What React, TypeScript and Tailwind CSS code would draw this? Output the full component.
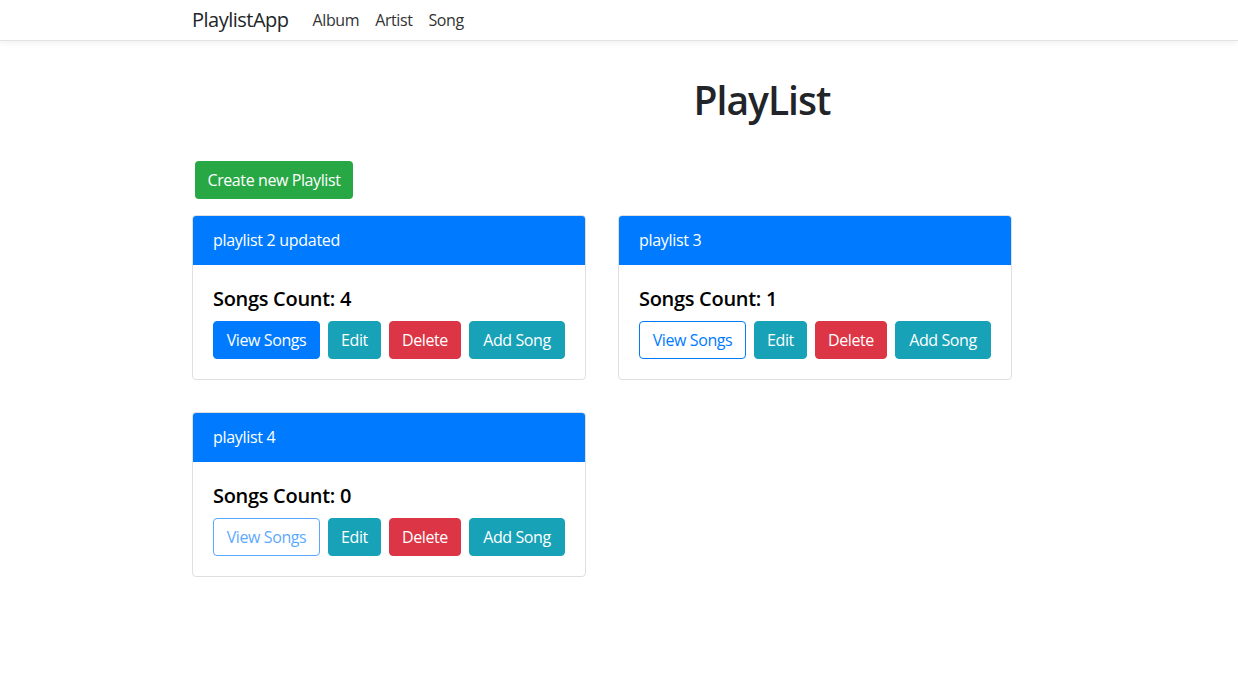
interface Playlist {
  name: string;
  count: number;
  view: "solid" | "outline" | "disabled";
}

const playlists: Playlist[] = [
  { name: "playlist 2 updated", count: 4, view: "solid" },
  { name: "playlist 3", count: 1, view: "outline" },
  { name: "playlist 4", count: 0, view: "disabled" },
];

const btn =
  "h-[38px] rounded-[4px] text-[16px] leading-none border flex items-center justify-center whitespace-nowrap tracking-[-0.4px]";

const PlaylistCard = ({ name, count, view }: Playlist) => {
  const viewCls =
    view === "solid"
      ? "bg-[#007bff] border-[#007bff] text-white"
      : view === "outline"
        ? "bg-white border-[#007bff] text-[#007bff]"
        : "bg-white border-[#007bff] text-[#007bff] opacity-65";

  return (
    <div className="w-[394px] border border-[#dfdfdf] rounded-[4px] overflow-hidden bg-white">
      <div className="h-[49px] bg-[#007bff] text-white text-[16px] px-[20px] pb-[2px] flex items-center tracking-[-0.3px]">
        {name}
      </div>
      <div className="px-[20px] pt-[20px] pb-[20px]">
        <div className="text-[20px] font-semibold text-black leading-[28px] mb-[8px] tracking-[-0.3px]">
          Songs Count: {count}
        </div>
        <div className="flex gap-[8px]">
          <button className={`${btn} w-[107px] ${viewCls}`}>View Songs</button>
          <button className={`${btn} w-[53px] bg-[#17a2b8] border-[#17a2b8] text-white`}>Edit</button>
          <button className={`${btn} w-[72px] bg-[#dc3545] border-[#dc3545] text-white`}>Delete</button>
          <button className={`${btn} w-[96px] bg-[#17a2b8] border-[#17a2b8] text-white`}>Add Song</button>
        </div>
      </div>
    </div>
  );
};

export default function App() {
  return (
    <div
      className="min-h-screen bg-white text-[#212529] overflow-hidden"
      style={{ fontFamily: '"Open Sans", "Noto Sans", sans-serif' }}
    >
      {/* navbar */}
      <nav className="h-[41px] border-b border-[#e3e3e3] shadow-[0_2px_6px_rgba(0,0,0,0.06)] flex items-center pl-[192px]">
        <span className="text-[20px] text-[#212529] mr-[16px] tracking-[-0.5px]">PlaylistApp</span>
        <div className="flex text-[16px] text-[#333] tracking-[-0.4px]">
          <span className="px-[8px]">Album</span>
          <span className="px-[8px]">Artist</span>
          <span className="px-[8px]">Song</span>
        </div>
      </nav>

      <main className="ml-[192px] w-[1140px]">
        <h1 className="text-center text-[39px] font-semibold leading-[48px] mt-[35px] text-[#212529] tracking-[-1px]">
          PlayList
        </h1>

        <button className="mt-[37px] ml-[3px] h-[38px] w-[158px] rounded-[4px] bg-[#28a745] text-white text-[16px] flex items-center justify-center whitespace-nowrap tracking-[-0.4px]">
          Create new Playlist
        </button>

        <div className="mt-[16px] grid grid-cols-[394px_393px] gap-x-[32px] gap-y-[32px]">
          {playlists.map((p) => (
            <PlaylistCard key={p.name} {...p} />
          ))}
        </div>
      </main>
    </div>
  );
}
